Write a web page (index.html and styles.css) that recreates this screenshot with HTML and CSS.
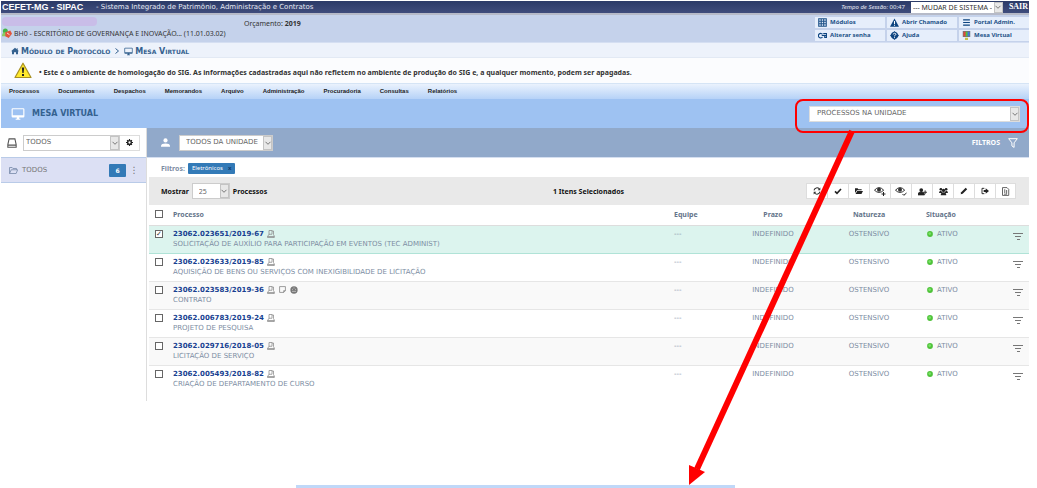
FILE: index.html
```html
<!DOCTYPE html>
<html lang="pt-BR">
<head>
<meta charset="utf-8">
<title>SIPAC - Mesa Virtual</title>
<link rel="stylesheet" href="styles.css">
</head>
<body>
<svg class="defs" width="0" height="0" aria-hidden="true">
  <symbol id="chev" viewBox="0 0 8 8"><path d="M1.500 2.800 4 5.300 6.500 2.800" fill="none" stroke="#777" stroke-width="1"/></symbol>
  <symbol id="monitor" viewBox="0 0 24 24"><path fill="currentColor" d="M21 2H3a2 2 0 0 0-2 2v12a2 2 0 0 0 2 2h7v2H8v2h8v-2h-2v-2h7a2 2 0 0 0 2-2V4a2 2 0 0 0-2-2zm0 12H3V4h18z"/></symbol>
  <symbol id="user" viewBox="0 0 16 16"><g fill="none" stroke="#888" stroke-width="1.500"><path d="M4 1h6v7.500H4zM4.500 8 1 13v2h13v-2H1"/><path d="M10 2h3v7l2 4v2"/></g></symbol>
  <symbol id="dot" viewBox="0 0 10 10"><circle cx="5" cy="5" r="4.800" fill="#4fc23a"/><circle cx="4.500" cy="4.300" r="2.200" fill="#7be368"/></symbol>
  <symbol id="lines" viewBox="0 0 10 10"><path d="M0 2.500h10M2 5.500h6M4 8.500h3" stroke="#777" stroke-width="1.200"/></symbol>
  <symbol id="eye" viewBox="0 0 12 10"><path d="M.5 4.200Q5-1 9.700 4.200 5 8.700.5 4.200z" fill="none" stroke="#333"/><circle cx="5" cy="3.800" r="2" fill="#333"/></symbol>
</svg>

<div class="app">
  <header class="topbar">
    <strong class="brand">CEFET-MG - SIPAC</strong>
    <span class="system">- Sistema Integrado de Patrimônio, Administração e Contratos</span>
    <span class="session"><em>Tempo de Sessão:</em> 00:47</span>
    <div class="pick pick-system">
      <select aria-label="Mudar de sistema"><option>--- MUDAR DE SISTEMA ---</option></select>
      <span class="arrow"><svg><use href="#chev"/></svg></span>
    </div>
    <a class="exit" href="#">SAIR</a>
  </header>

  <section class="info">
    <div class="identity">
      <span class="mask"></span>
      <div class="unit">
        <svg class="i10" viewBox="0 0 12 12"><circle cx="4" cy="3.500" r="3" fill="#45b548"/><path d="M0 10q0-5 4-5t3 5z" fill="#8acb62"/><path d="M4 5l6-2 2 4-4 5-4-2z" fill="#e2553c"/><path d="M6 6l3 2" stroke="#fff"/></svg>
        <span>BH0 - ESCRITÓRIO DE GOVERNANÇA E INOVAÇÃO... (11.01.03.02)</span>
      </div>
    </div>
    <div class="budget">Orçamento: <strong>2019</strong></div>
    <nav class="shortcuts">
      <a href="#"><svg class="i9" viewBox="0 0 12 12"><path d="M1 1h10v10H1zM1 4.300h10M1 7.600h10M4.300 1v10M7.600 1v10" fill="none" stroke="#1d5288" stroke-width="1.500"/></svg>Módulos</a>
      <a href="#"><svg class="i9" viewBox="0 0 12 12"><path d="M6 .5 12 11.500H0z" fill="#0d4480"/><path d="M6 4v4M6 9v1.300" stroke="#fff" stroke-width="1.400"/></svg>Abrir Chamado</a>
      <a href="#"><svg class="i9" viewBox="0 0 12 12"><path d="M1.500 2.500h9M1.500 6h9M1.500 9.500h9" stroke="#0d4480" stroke-width="1.500"/></svg>Portal Admin.</a>
      <a href="#"><svg class="i9" viewBox="0 0 12 12"><g fill="none" stroke="#0d4480" stroke-width="1.500"><path d="M6 4.500A3 3 0 1 0 6 8"/><path d="M5 6h7M7 3.500h4.500v5H9V6"/></g></svg>Alterar senha</a>
      <a href="#"><svg class="i9" viewBox="0 0 12 12"><path d="M6 0 12 6 6 12 0 6z" fill="#0d4480"/><circle cx="6" cy="6" r="4.600" fill="#0d4480"/><path d="M4.300 4.600q.2-1.600 1.800-1.600t1.700 1.500Q7.800 5.500 6 6.300v.8M6 8.200v1.300" fill="none" stroke="#fff" stroke-width="1.200"/></svg>Ajuda</a>
      <a href="#"><svg class="i9" viewBox="0 0 12 12"><path d="M1 0h10v8H1z" fill="#777"/><path d="M2 1h3v6H2z" fill="#e34a3a"/><path d="M5 1h2.500v6H5z" fill="#4ec73d"/><path d="M7.500 1H10v6H7.500z" fill="#3a7be3"/><path d="M4 9h4v3H4z" fill="#c9c34b"/></svg>Mesa Virtual</a>
    </nav>
  </section>

  <nav class="crumbs">
    <a href="#"><svg class="i8" viewBox="0 0 12 12"><path d="M6 1 0 6.500h1.500V11h3V8h3v3h3V6.500H12L10 4.600V2H8.700v1.400z" fill="#34618f"/></svg>Módulo de Protocolo</a>
    <svg class="i6" viewBox="0 0 6 6"><path d="M1.500.5 4.500 3 1.500 5.500" fill="none" stroke="#34618f"/></svg>
    <a href="#"><svg class="i9"><use href="#monitor"/></svg>Mesa Virtual</a>
  </nav>

  <section class="warning">
    <svg class="alert" viewBox="0 0 18 17"><path d="M9 1.200 17 15.500H1z" fill="#ffe92c" stroke="#a89022" stroke-width="1.200" stroke-linejoin="round"/><path d="M7.800 5.500h2.400L9.600 11H8.400zM8 12h2v2H8z" fill="#222"/></svg>
    <strong>• Este é o ambiente de homologação do SIG. As informações cadastradas aqui não refletem no ambiente de produção do SIG e, a qualquer momento, podem ser apagadas.</strong>
  </section>

  <nav class="menu">
    <a href="#">Processos</a><a href="#">Documentos</a><a href="#">Despachos</a><a href="#">Memorandos</a><a href="#">Arquivo</a><a href="#">Administração</a><a href="#">Procuradoria</a><a href="#">Consultas</a><a href="#">Relatórios</a>
  </nav>

  <section class="titlebar">
    <svg class="i14"><use href="#monitor"/></svg>
    <h1>MESA VIRTUAL</h1>
    <div class="pick pick-main">
      <select aria-label="Caixa de processos"><option>PROCESSOS NA UNIDADE</option></select>
      <span class="arrow"><svg><use href="#chev"/></svg></span>
    </div>
  </section>

  <div class="body">
    <aside class="side">
      <div class="boxes">
        <svg class="i10" viewBox="0 0 12 12"><path d="M2.500 1h7L11 8v3H1V8zM1 8.500h10" fill="none" stroke="#555" stroke-width="1.300"/></svg>
        <div class="pick pick-box">
          <select aria-label="Marcador"><option>TODOS</option></select>
          <span class="arrow"><svg><use href="#chev"/></svg></span>
        </div>
        <button class="gear" aria-label="Configurar"><svg class="i7" viewBox="0 0 12 12"><circle cx="6" cy="6" r="3.200" fill="none" stroke="#222" stroke-width="2.400"/><path d="M6 0v2.500M6 9.500V12M0 6h2.500M9.500 6H12M1.800 1.800l1.700 1.700M8.500 8.500l1.700 1.700M10.200 1.800 8.500 3.500M3.500 8.500l-1.700 1.700" stroke="#222" stroke-width="2"/></svg></button>
      </div>
      <div class="folder">
        <svg class="i9" viewBox="0 0 12 12"><path d="M.7 10V2h3.500l1 1.300H10V5M.7 10 3 5h8.500L9.500 10z" fill="none" stroke="#7a8cab" stroke-width="1.100"/></svg>
        <a href="#">TODOS</a>
        <span class="count">6</span>
        <button class="dots" aria-label="Opções">⋮</button>
      </div>
    </aside>

    <main class="content">
      <div class="scope">
        <svg class="i9" viewBox="0 0 12 12"><circle cx="6" cy="3.200" r="2.800" fill="#fff"/><path d="M0 11.500V10q.5-2.700 6-2.700t6 2.700v1.500z" fill="#fff"/></svg>
        <div class="pick pick-scope">
          <select aria-label="Responsável"><option>TODOS DA UNIDADE</option></select>
          <span class="arrow"><svg><use href="#chev"/></svg></span>
        </div>
        <button class="filter">FILTROS <svg class="i10" viewBox="0 0 12 12"><path d="M.8.8h10.400L7.300 5.800v5.500L4.700 9.500V5.800z" fill="none" stroke="#fff" stroke-width="1.200"/></svg></button>
      </div>
      <div class="applied"><strong>Filtros:</strong> <span class="chip">Eletrônicos <button aria-label="Remover filtro">x</button></span></div>

      <div class="tools">
        <div class="show">
          <label for="per">Mostrar</label>
          <div class="pick pick-per">
            <select id="per"><option>25</option></select>
            <span class="arrow"><svg><use href="#chev"/></svg></span>
          </div>
          <span>Processos</span>
        </div>
        <strong class="selected">1 Itens Selecionados</strong>
        <div class="actions">
          <button aria-label="Atualizar"><svg class="i8" viewBox="0 0 12 12"><path d="M1.500 5A4.500 4.500 0 0 1 9.500 3M10.500 7A4.500 4.500 0 0 1 2.500 9" fill="none" stroke="#333" stroke-width="1.600"/><path d="M11 .8V5H7zM1 11.200V7h4z" fill="#333"/></svg></button>
          <button aria-label="Confirmar"><svg class="i8" viewBox="0 0 12 12"><path d="M1.500 6.500 4.500 9.500 10.500 3" fill="none" stroke="#222" stroke-width="2.400"/></svg></button>
          <button aria-label="Abrir"><svg class="i8" viewBox="0 0 12 12"><path d="M0 2h4l1 1.500h5V5H3L0 9zM3.300 6H12l-2.300 4.500H.8z" fill="#222"/></svg></button>
          <button aria-label="Acompanhar"><svg class="i12" viewBox="0 0 12 10"><use href="#eye"/><path d="M9.500 6v4M7.500 8h4" stroke="#222"/></svg></button>
          <button aria-label="Dar ciência"><svg class="i12" viewBox="0 0 12 10"><use href="#eye"/><path d="M7.500 8l1.300 1.300L11.500 7" fill="none" stroke="#222"/></svg></button>
          <button aria-label="Adicionar responsável"><svg class="i9" viewBox="0 0 12 12"><circle cx="4.300" cy="4" r="2.500" fill="#222"/><path d="M0 10.500q0-4 4.300-4t4.300 4zM9.500 4.500v5M7 7h5" fill="#222" stroke="#222" stroke-width="1.200"/></svg></button>
          <button aria-label="Equipe"><svg class="i9" viewBox="0 0 12 12"><g fill="#222"><circle cx="2.500" cy="3" r="1.800"/><circle cx="9.500" cy="3" r="1.800"/><circle cx="6" cy="4.500" r="2.200"/><path d="M0 8q0-3 3-3l1.500 3zM12 8q0-3-3-3L7.500 8zM2.300 11q0-4 3.700-4t3.700 4z"/></g></svg></button>
          <button aria-label="Editar"><svg class="i8" viewBox="0 0 12 12"><path d="M1 11l.8-3L8.500 1.200l2.300 2.300L4 10.200z" fill="#222"/></svg></button>
          <button aria-label="Enviar"><svg class="i8" viewBox="0 0 12 12"><path d="M5 2H1.500v8H5" fill="none" stroke="#222" stroke-width="1.400"/><path d="M4 4.500h3V2l5 4-5 4V7.500H4z" fill="#222"/></svg></button>
          <button aria-label="Arquivo"><svg class="i9" viewBox="0 0 12 12"><path d="M2 .8h6l2.300 2.300v8.100H2zM5 3v5M7.500 4v5M4 9.500h4" fill="none" stroke="#555" stroke-width="1.200"/></svg></button>
        </div>
      </div>

      <table>
        <thead>
          <tr><th class="c-check"><input type="checkbox" aria-label="Selecionar todos"></th><th class="c-proc">Processo</th><th class="c-team">Equipe</th><th class="c-due">Prazo</th><th class="c-kind">Natureza</th><th class="c-state">Situação</th><th class="c-more"></th></tr>
        </thead>
        <tbody>
          <tr class="on"><td><input type="checkbox" checked aria-label="23062.023651/2019-67"></td><td class="proc"><a href="#">23062.023651/2019-67</a><svg class="i8"><use href="#user"/></svg><p>SOLICITAÇÃO DE AUXÍLIO PARA PARTICIPAÇÃO EM EVENTOS (TEC ADMINIST)</p></td><td>---</td><td class="mid">INDEFINIDO</td><td class="mid">OSTENSIVO</td><td class="state"><svg class="i6"><use href="#dot"/></svg>ATIVO</td><td class="mid"><button aria-label="Ações"><svg class="i10"><use href="#lines"/></svg></button></td></tr>
          <tr><td><input type="checkbox" aria-label="23062.023633/2019-85"></td><td class="proc"><a href="#">23062.023633/2019-85</a><svg class="i8"><use href="#user"/></svg><p>AQUISIÇÃO DE BENS OU SERVIÇOS COM INEXIGIBILIDADE DE LICITAÇÃO</p></td><td>---</td><td class="mid">INDEFINIDO</td><td class="mid">OSTENSIVO</td><td class="state"><svg class="i6"><use href="#dot"/></svg>ATIVO</td><td class="mid"><button aria-label="Ações"><svg class="i10"><use href="#lines"/></svg></button></td></tr>
          <tr class="alt"><td><input type="checkbox" aria-label="23062.023583/2019-36"></td><td class="proc"><a href="#">23062.023583/2019-36</a><svg class="i8"><use href="#user"/></svg><svg class="i7 gap" viewBox="0 0 12 12"><path d="M1 1h10v7l-3 3H1zM8 11V8h3" fill="none" stroke="#777" stroke-width="1.200"/></svg><svg class="i8 gap" viewBox="0 0 12 12"><circle cx="6" cy="6" r="5.500" fill="#777"/><path d="M3 5h1.500M7.500 5H9M3 8h6M6 2v2" stroke="#ddd"/></svg><p>CONTRATO</p></td><td>---</td><td class="mid">INDEFINIDO</td><td class="mid">OSTENSIVO</td><td class="state"><svg class="i6"><use href="#dot"/></svg>ATIVO</td><td class="mid"><button aria-label="Ações"><svg class="i10"><use href="#lines"/></svg></button></td></tr>
          <tr><td><input type="checkbox" aria-label="23062.006783/2019-24"></td><td class="proc"><a href="#">23062.006783/2019-24</a><svg class="i8"><use href="#user"/></svg><p>PROJETO DE PESQUISA</p></td><td>---</td><td class="mid">INDEFINIDO</td><td class="mid">OSTENSIVO</td><td class="state"><svg class="i6"><use href="#dot"/></svg>ATIVO</td><td class="mid"><button aria-label="Ações"><svg class="i10"><use href="#lines"/></svg></button></td></tr>
          <tr class="alt"><td><input type="checkbox" aria-label="23062.029716/2018-05"></td><td class="proc"><a href="#">23062.029716/2018-05</a><svg class="i8"><use href="#user"/></svg><p>LICITAÇÃO DE SERVIÇO</p></td><td>---</td><td class="mid">INDEFINIDO</td><td class="mid">OSTENSIVO</td><td class="state"><svg class="i6"><use href="#dot"/></svg>ATIVO</td><td class="mid"><button aria-label="Ações"><svg class="i10"><use href="#lines"/></svg></button></td></tr>
          <tr><td><input type="checkbox" aria-label="23062.005493/2018-82"></td><td class="proc"><a href="#">23062.005493/2018-82</a><svg class="i8"><use href="#user"/></svg><p>CRIAÇÃO DE DEPARTAMENTO DE CURSO</p></td><td>---</td><td class="mid">INDEFINIDO</td><td class="mid">OSTENSIVO</td><td class="state"><svg class="i6"><use href="#dot"/></svg>ATIVO</td><td class="mid"><button aria-label="Ações"><svg class="i10"><use href="#lines"/></svg></button></td></tr>
        </tbody>
      </table>
    </main>
  </div>
</div>
<div class="panel-edge"></div>
<svg class="callout" width="242" height="36" viewBox="0 0 242 36" aria-hidden="true">
  <rect x="1" y="1" width="232" height="32" rx="7"/>
</svg>
<svg class="pointer" width="180" height="360" viewBox="0 0 180 360" aria-hidden="true">
  <path d="M167 2 12 340" stroke="#f00" stroke-width="6"/><path d="M4 356 4 336 20 343z" fill="#f00"/>
</svg>
</body>
</html>
```
FILE: styles.css
```css
* { box-sizing: border-box; }
body {
  margin: 0;
  padding: 1px 8px 0 1px;
  position: relative;
  min-height: 100vh;
  overflow: hidden;
  background: #fff;
  color: #333;
  font: 7px/9px "DejaVu Sans", Verdana, sans-serif;
}
a { color: inherit; text-decoration: none; }
button, select, input { font: inherit; color: inherit; margin: 0; }
button { padding: 0; border: 0; background: none; display: inline-flex; align-items: center; justify-content: center; }
svg { flex: none; }
.defs { position: absolute; }
.i6 { width: 6px; height: 6px; }
.i7 { width: 7px; height: 7px; }
.i8 { width: 8px; height: 8px; }
.i9 { width: 9px; height: 9px; }
.i10 { width: 10px; height: 10px; }
.i12 { width: 12px; height: 10px; }
.i14 { width: 14px; height: 14px; }

.pick { display: flex; height: 16px; background: #fff; border: 1px solid #ccc; color: #666; }
.pick select { flex: 1; min-width: 0; appearance: none; border: 0; background: none; padding: 0 2px; }
.arrow { display: flex; align-items: center; justify-content: center; width: 9px; background: #e8e8e8; border: 1px solid #c4c4c4; }
.arrow svg { width: 8px; height: 8px; }

.topbar {
  display: flex;
  align-items: center;
  height: 14px;
  padding: 0 1px;
  border-bottom: 2px solid #b6bac8;
  background: linear-gradient(#2b3a67, #3f4c7c);
  color: #e6e9f3;
  white-space: nowrap;
}
.brand { font: bold 9px/10px "Liberation Sans", Arial, sans-serif; width: 94px; color: #fff; }
.session { margin-left: auto; font: 6px/9px "Noto Sans", sans-serif; }
.pick-system { width: 92px; height: 11px; margin: 0 6px; border: 0; color: #333; font: 7px/9px "Noto Sans", sans-serif; }
.exit { font: bold 8px/10px "Liberation Serif", serif; color: #fff; }

.info { display: flex; height: 28px; background: #c5d2eb; border-bottom: 1px solid #d5dff2; font-family: "Noto Sans", sans-serif; }
.identity { width: 243px; padding: 2px 0 0 1px; white-space: nowrap; }
.mask { display: block; width: 95px; height: 9px; border-radius: 4px; background: #c9bde8; }
.unit { display: flex; align-items: center; gap: 2px; padding-top: 2px; }
.budget { padding-top: 4px; }
.shortcuts {
  margin-left: auto;
  display: grid;
  grid-template-columns: 70px 70px 70px;
  grid-auto-rows: 11px;
  gap: 2px;
  padding-top: 2px;
  font-size: 6px;
  font-weight: bold;
  color: #1d5288;
}
.shortcuts a { display: flex; align-items: center; gap: 3px; padding-left: 3px; background: #e6eefb; }

.crumbs { display: flex; align-items: center; gap: 4px; height: 15px; padding: 2px 0 0 10px; background: #edf2fb; border-bottom: 1px solid #e2e9f4; color: #34618f; font-size: 8px; font-weight: bold; font-variant: small-caps; }
.crumbs a { display: flex; align-items: center; gap: 2px; }

.warning { display: flex; align-items: center; gap: 7px; height: 25px; padding-left: 13px; background: #fbfcfe; font-family: "Noto Sans", sans-serif; }
.warning strong { padding-top: 4px; }
.alert { width: 18px; height: 17px; }

.menu { display: flex; align-items: center; gap: 19px; height: 16px; padding-left: 8px; background: linear-gradient(#eaf2fd, #b6d2f7); border-top: 1px solid #d5e4f5; font: bold 6px/9px "Liberation Sans", Arial, sans-serif; color: #222; }

.titlebar { display: flex; align-items: center; gap: 7px; height: 29px; padding: 0 9px 0 10px; background: #9ec2f2; color: #fff; }
.titlebar h1 { margin: 0; font-size: 8px; color: #34618f; }
.pick-main { width: 211px; margin-left: auto; border-color: #ddd; }
.pick-main select { padding-left: 7px; }

.body { display: flex; }
.side { width: 145px; }
.boxes { display: flex; align-items: center; height: 29px; padding: 0 6px; }
.pick-box { width: 98px; margin-left: 6px; }
.gear { width: 20px; height: 16px; border: 1px solid #ddd; border-left: 0; }
.folder { display: flex; align-items: center; gap: 4px; height: 26px; padding: 0 8px; background: #dce0f4; border-top: 1px solid #b9cbe8; border-bottom: 1px solid #b9cbe8; color: #777; }
.count { width: 17px; margin-left: auto; background: #337ab7; color: #fff; text-align: center; font: bold 6px/13px "DejaVu Sans", sans-serif; border-radius: 1px; }
.dots { width: 8px; font-size: 9px; }

.content { flex: 1; min-width: 0; border-left: 1px solid #ddd; padding-bottom: 8px; }
.scope { display: flex; align-items: center; gap: 9px; height: 30px; padding: 0 11px 0 14px; background: #91a9ca; border-bottom: 1px solid #d5dff0; }
.pick-scope { width: 94px; }
.pick-scope select { padding-left: 6px; }
.filter { margin-left: auto; gap: 8px; color: #fff; font: bold 7px/9px "Noto Sans", sans-serif; }
.applied { display: flex; align-items: center; gap: 3px; height: 19px; padding: 2px 0 0 14px; color: #7d8da3; font-family: "Noto Sans", sans-serif; }
.chip { display: flex; align-items: center; gap: 5px; padding: 0 4px; background: #337ab7; color: #fff; font: 6px/11px "Noto Sans", sans-serif; border-radius: 1px; }
.chip button { color: #123a70; font-weight: bold; }

.tools { display: grid; grid-template-columns: 1fr auto 1fr; align-items: center; height: 28px; margin-left: 2px; padding: 0 13px 0 12px; background: #e9e9e9; color: #111; font-family: "Noto Sans", sans-serif; }
.show { display: flex; align-items: center; gap: 3px; font-weight: bold; }
.pick-per { width: 38px; font-weight: normal; }
.pick-per select { padding-left: 6px; }
.actions { display: flex; justify-content: flex-end; }
.actions button { width: 21px; height: 16px; background: #fff; border: 1px solid #ddd; border-right: 0; }
.actions button:last-child { border-right: 1px solid #ddd; }

table { width: calc(100% - 2px); margin-left: 2px; border-collapse: collapse; table-layout: fixed; color: #7d8da3; }
th { height: 20px; padding: 0 0 1px; text-align: center; color: #64748a; border-bottom: 1px solid #ddd; font-family: "Noto Sans", sans-serif; }
td { height: 28px; padding: 4px 0 0; vertical-align: top; border-bottom: 1px solid #e6e6e6; }
tbody tr:last-child td { border-bottom: 0; }
.c-check { width: 24px; }
.c-proc, .c-team, .c-state { text-align: left; }
.c-team { width: 57px; }
.c-due { width: 84px; }
.c-kind { width: 108px; }
.c-state { width: 84px; }
th.c-state { padding-left: 3px; }
.c-more { width: 22px; }
.mid { text-align: center; }
.mid button { padding-top: 1px; }
.on td { background: #dcf4ee; border-bottom-color: #b0e3d7; }
.alt td { background: #f9f9f9; }
.proc a { font-weight: bold; color: #173f91; }
.proc svg { margin-left: 3px; vertical-align: middle; }
.proc .gap { margin-left: 4px; }
.proc p { margin: 1px 0 0; }
.state svg { margin: 0 4px; vertical-align: middle; }
input[type="checkbox"] { appearance: none; display: grid; place-items: center; width: 8px; height: 8px; margin: 0 0 0 6px; border: 1px solid #666; background: #fff; }
input[type="checkbox"]:checked::after { content: "✓"; font: 7px/6px "DejaVu Sans", sans-serif; color: #333; }

.panel-edge { position: absolute; left: 296px; top: 485px; width: 439px; height: 3px; background: #c0d8f8; }
.callout { position: absolute; right: 0; top: 99px; fill: none; stroke: #f00; stroke-width: 2px; }
.pointer { position: absolute; right: 172px; top: 129px; }
```
